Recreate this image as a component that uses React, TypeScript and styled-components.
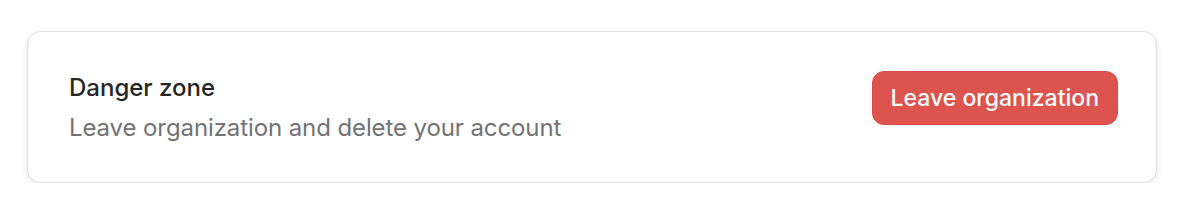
import styled, { createGlobalStyle } from 'styled-components';

const Global = createGlobalStyle`
  html, body {
    margin: 0;
    background: #ffffff;
    font-family: Inter, "Noto Sans", sans-serif;
    -webkit-font-smoothing: antialiased;
  }
`;

const Page = styled.div`
  padding: 31px 27px 0 27px;
`;

const Card = styled.section`
  display: flex;
  justify-content: space-between;
  align-items: flex-start;
  padding: 39px 38px 39px 41px;
  border: 1px solid #e0e0e0;
  border-radius: 14px;
  background: #fff;
  box-shadow: 0 2px 6px rgba(0, 0, 0, 0.1);
`;

const Texts = styled.div`
  display: flex;
  flex-direction: column;
  gap: 10px;
  padding-top: 2px;
`;

const Title = styled.h2`
  margin: 0;
  font-size: 24px;
  line-height: 30px;
  font-weight: 500;
  color: #262626;
`;

const Subtitle = styled.p`
  margin: 0;
  font-size: 24px;
  line-height: 30px;
  font-weight: 400;
  letter-spacing: -0.1px;
  color: #737373;
`;

const DangerButton = styled.button`
  height: 54px;
  padding: 0 18px;
  border: 1px solid #d94c47;
  border-radius: 12px;
  background: #dd534e;
  color: #fff;
  font-family: inherit;
  font-size: 23px;
  font-weight: 500;
  cursor: pointer;
`;

export default function App() {
  return (
    <Page>
      <Global />
      <Card>
        <Texts>
          <Title>Danger zone</Title>
          <Subtitle>Leave organization and delete your account</Subtitle>
        </Texts>
        <DangerButton>Leave organization</DangerButton>
      </Card>
    </Page>
  );
}
